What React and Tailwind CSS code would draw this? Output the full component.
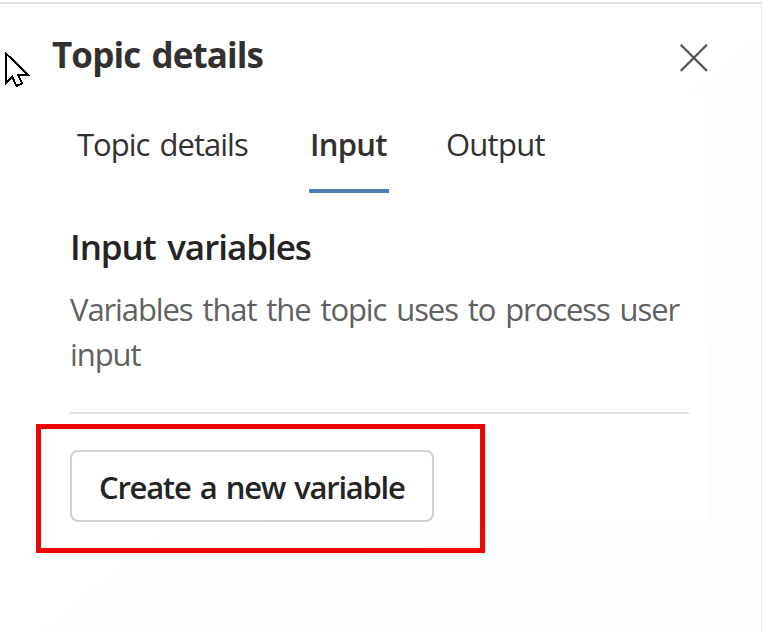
const tabs = [
  { label: "Topic details", cls: "ml-[7px] w-[174px] border-transparent tracking-[-0.98px] [word-spacing:3px]" },
  { label: "Input", cls: "ml-[58px] w-20 border-[#4c7fae] pl-px font-semibold tracking-[-0.7px]" },
  { label: "Output", cls: "ml-[57px] w-[102px] border-transparent tracking-[-0.75px]" },
];

function Cursor() {
  return (
    <svg className="absolute left-[4px] top-[50px]" width="28" height="40" viewBox="0 0 28 40" fill="none">
      <path
        d="M2 3.5V33L8.2 27L12.6 36L18.2 33.5L14.2 25H24Z"
        fill="#fff"
        stroke="#000"
        strokeWidth="2"
        shapeRendering="crispEdges"
      />
    </svg>
  );
}

export default function App() {
  return (
    <div className="relative h-[632px] w-[762px] overflow-hidden border-r border-[#e4e4e4] bg-white bg-linear-to-br from-white from-50% to-[#fbfdff] to-75% pt-[2px] font-['Open_Sans','Noto_Sans',sans-serif] text-[#323130]">
      <div className="h-[2px] bg-[#e0e0e0]" />
      <header className="flex h-[92px] items-start justify-between pl-[52px] pr-[53px] pt-[27px]">
        <h1 className="whitespace-nowrap text-[35px] font-bold leading-[48px] tracking-[-0.9px] [word-spacing:3px]">
          Topic details
        </h1>
        <button aria-label="Close" className="mt-[13px]">
          <svg width="28" height="28" viewBox="0 0 28 28" fill="none" stroke="#555453" strokeWidth="2.2">
            <path d="M0.7 0.7L26.9 26.9M26.9 0.7L0.7 26.9" />
          </svg>
        </button>
      </header>
      <main className="ml-[51px] flex h-[426px] w-[656px] flex-col bg-white px-[19px] pt-[26px]">
        <nav className="flex h-[71px] whitespace-nowrap text-[31px] leading-[44px]">
          {tabs.map((t) => (
            <div key={t.label} className={"h-[71px] shrink-0 border-b-4 " + t.cls}>
              {t.label}
            </div>
          ))}
        </nav>
        <h2 className="mt-[30px] whitespace-nowrap text-[35px] font-semibold leading-[48px] tracking-[-1.03px] text-[#242424] [word-spacing:3.5px]">
          Input variables
        </h2>
        <p className="mt-[16px] whitespace-nowrap text-[31px] leading-[45px] tracking-[-1.1px] text-[#616161] [word-spacing:3px]">
          Variables that the topic uses to process user
          <br />
          input
        </p>
        <hr className="mt-[35px] h-[2px] w-[619px] shrink-0 border-0 bg-[#e0e0e0]" />
        <button className="mt-[36px] h-[72px] w-[364px] shrink-0 whitespace-nowrap rounded-[8px] border-2 border-[#d1d1d1] bg-white pl-[27px] pt-px text-left text-[31px] font-semibold leading-[44px] tracking-[-1.25px] text-[#242424] [word-spacing:2.5px]">
          Create a new variable
        </button>
      </main>
      <div className="pointer-events-none absolute left-[36px] top-[424px] h-[129px] w-[449px] border-5 border-[#eb0606]" />
      <Cursor />
    </div>
  );
}
